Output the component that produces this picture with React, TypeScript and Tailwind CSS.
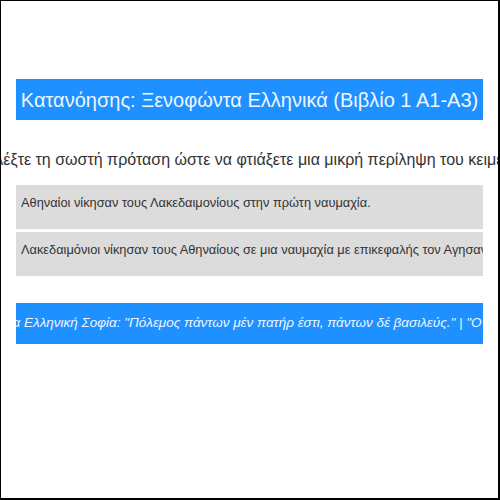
import React from 'react';

const options = [
  'Αθηναίοι νίκησαν τους Λακεδαιμονίους στην πρώτη ναυμαχία.',
  'Λακεδαιμόνιοι νίκησαν τους Αθηναίους σε μια ναυμαχία με επικεφαλής τον Αγησανδρίδα.',
];

export default function App() {
  return (
    <div className="w-[500px] h-[500px] bg-white border-l border-t border-r-2 border-b-2 border-black overflow-hidden font-['Liberation_Sans',Arial,sans-serif]">
      <div className="px-[15px] pt-[78px]">
        {/* title */}
        <div className="h-[41px] bg-[#1e90ff] flex items-center justify-center overflow-hidden">
          <h1 className="whitespace-nowrap text-[20px] text-[#eef6ff]">
            Κατανόησης: Ξενοφώντα Ελληνικά (Βιβλίο 1 Α1-Α3)
          </h1>
        </div>

        {/* instruction */}
        <div className="-mx-[15px] mt-[28px] h-[24px] flex items-center justify-center overflow-hidden">
          <p className="whitespace-nowrap text-[16px] text-[#333]">
            Επιλέξτε τη σωστή πρόταση ώστε να φτιάξετε μια μικρή περίληψη του κειμένου
          </p>
        </div>

        {/* options */}
        <div className="mt-[13px] flex flex-col gap-[3px]">
          {options.map((opt, i) => (
            <div key={i} className="h-[44px] bg-[#dcdcdc] flex items-start pt-[10px] pl-[5px] overflow-hidden">
              <span className="whitespace-nowrap text-[12.8px] leading-[15px] text-[#333]">{opt}</span>
            </div>
          ))}
        </div>

        {/* ticker */}
        <div className="mt-[27px] h-[41px] bg-[#1e90ff] flex items-center overflow-hidden">
          <span className="whitespace-nowrap italic text-[13.5px] text-[#eef6ff] -ml-[38px]">
            Αρχαία Ελληνική Σοφία: "Πόλεμος πάντων μέν πατήρ έστι, πάντων δέ βασιλεύς." | "Ο βίος βραχύς, η δε τέχνη μακρή."
          </span>
        </div>
      </div>
    </div>
  );
}
